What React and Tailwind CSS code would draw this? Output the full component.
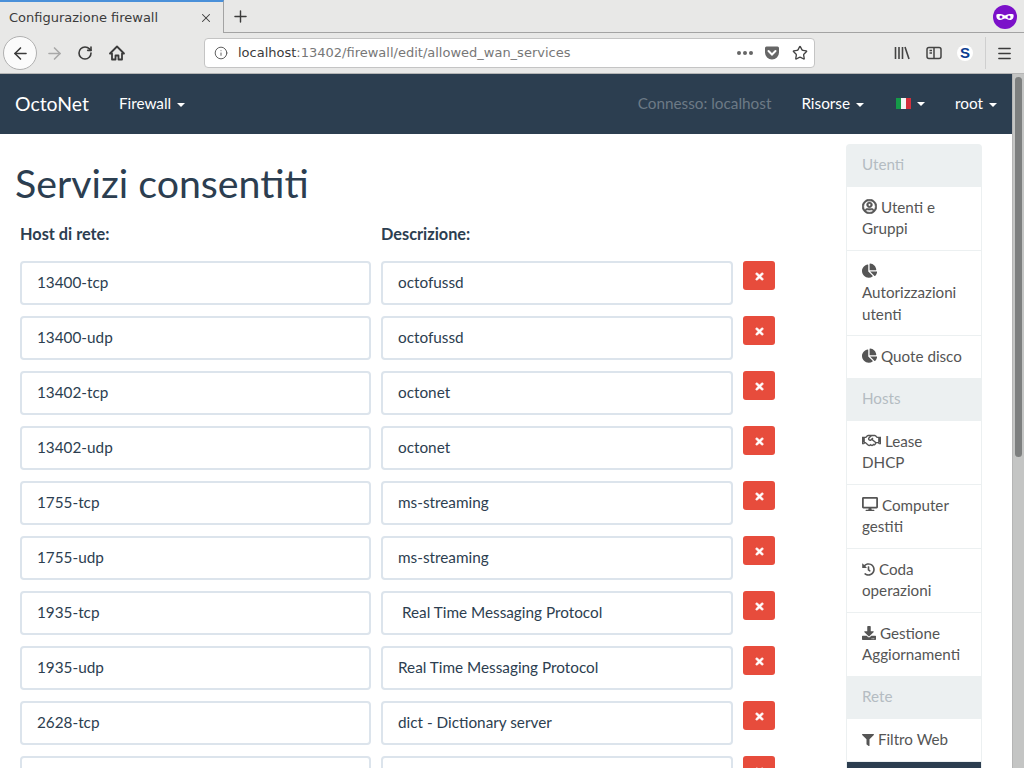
import React from "react";
import { ArrowLeft, ArrowRight, RotateCw, Info, Star, Menu, Plus, X } from "lucide-react";
import { FaRegUserCircle, FaChartPie, FaRegHandshake, FaDesktop, FaHistory, FaDownload, FaFilter, FaTimes } from "react-icons/fa";

const services = [
  ["13400-tcp", "octofussd"],
  ["13400-udp", "octofussd"],
  ["13402-tcp", "octonet"],
  ["13402-udp", "octonet"],
  ["1755-tcp", "ms-streaming"],
  ["1755-udp", "ms-streaming"],
  ["1935-tcp", " Real Time Messaging Protocol"],
  ["1935-udp", "Real Time Messaging Protocol"],
  ["2628-tcp", "dict - Dictionary server"],
  ["", ""],
];

const sidebar = [
  { header: "Utenti" },
  { icon: <FaRegUserCircle className="inline align-[-1px] text-[15px]" stroke="currentColor" strokeWidth={24} />, label: "Utenti e Gruppi" },
  { icon: <FaChartPie className="inline align-[-1px]" />, label: "Autorizzazioni utenti" },
  { icon: <FaChartPie className="inline align-[-1px]" />, label: "Quote disco" },
  { header: "Hosts" },
  { icon: <FaRegHandshake className="inline align-[-3px] text-[19px]" />, label: "Lease DHCP" },
  { icon: <FaDesktop className="inline align-[-1px] text-[16px]" />, label: "Computer gestiti" },
  { icon: <FaHistory className="inline align-[-1px] text-[13px]" />, label: "Coda operazioni" },
  { icon: <FaDownload className="inline align-[-1px] text-[14px]" />, label: "Gestione Aggiornamenti" },
  { header: "Rete" },
  { icon: <FaFilter className="inline align-[-1px] text-[12px]" />, label: "Filtro Web" },
  { label: "Servizi consentiti", active: true },
];

const Caret = () => (
  <span className="inline-block ml-[6px] align-middle w-0 h-0 border-x-[4px] border-x-transparent border-t-[4px] border-t-white" />
);

const BrowserChrome = () => (
  <div className="shrink-0 bg-[#e8e8e7] text-[#3b3b3b] font-['DejaVu_Sans',sans-serif]">
    {/* tab strip */}
    <div className="flex items-stretch h-[33px]">
      <div className="w-[224px] bg-[#e8e8e7] border-t-2 border-t-[#4a90d9] border-r border-r-[#a3a3a3] flex items-center pl-[9px] pr-[10px] text-[13px]">
        <span className="flex-1">Configurazione firewall</span>
        <X size={14} strokeWidth={1.8} />
      </div>
      <div className="flex-1 border-b border-b-[#a3a3a3] flex items-center pl-[7px] relative">
        <Plus size={19} strokeWidth={1.8} />
        <svg viewBox="0 0 24 24" className="absolute right-[7px] top-[5px] w-[24px] h-[24px]">
          <circle cx="12" cy="12" r="12" fill="#7b10c9" />
          <path d="M3.500 9.500c3-.8 5-.3 8.500 1 3.500-1.300 5.500-1.800 8.500-1 .6 3-.8 5.500-3.500 5.500-2.300 0-3.500-1.500-5-1.500s-2.700 1.500-5 1.500C4.300 15 2.900 12.500 3.500 9.500z" fill="#fff" />
          <circle cx="8" cy="12" r="1.500" fill="#7b10c9" />
          <circle cx="16" cy="12" r="1.500" fill="#7b10c9" />
        </svg>
      </div>
    </div>
    {/* toolbar */}
    <div className="flex items-center h-[41px] border-b border-b-[#b5b5b5] relative">
      <div className="ml-[3px] w-[34px] h-[34px] rounded-full bg-[#fbfbfb] border border-[#b0b0b0] flex items-center justify-center">
        <ArrowLeft size={19} strokeWidth={2} />
      </div>
      <ArrowRight size={19} strokeWidth={2} className="ml-[8px] text-[#a8a8a8]" />
      <RotateCw size={16} strokeWidth={2.4} className="ml-[13px]" />
      <svg viewBox="0 0 16 16" className="ml-[16px] w-[16px] h-[16px]">
        <path d="M8 1.500L1 8.500h2v6h3.500v-4h3v4H13v-6h2z" fill="none" stroke="#3b3b3b" strokeWidth="1.800" strokeLinejoin="round" />
      </svg>
      <div className="ml-[79px] w-[611px] h-[30px] bg-white border border-[#c4c4c4] rounded-[4px] flex items-center pl-[9px] pr-[6px] text-[13px]">
        <Info size={14} strokeWidth={1.6} className="text-[#555]" />
        <span className="ml-[10px] flex-1">
          localhost<span className="text-[#777]">:13402/firewall/edit/allowed_wan_services</span>
        </span>
        <span className="flex gap-[2px] mr-[11px]">
          <span className="w-[4px] h-[4px] rounded-full bg-[#666]" />
          <span className="w-[4px] h-[4px] rounded-full bg-[#666]" />
          <span className="w-[4px] h-[4px] rounded-full bg-[#666]" />
        </span>
        <svg viewBox="0 0 16 16" className="w-[16px] h-[16px] mr-[12px]">
          <path d="M1 3a1.500 1.500 0 0 1 1.500-1.500h11A1.500 1.500 0 0 1 15 3v4.500a7 7 0 0 1-14 0z" fill="#666" />
          <path d="M4.500 6L8 9.500 11.500 6" fill="none" stroke="#fff" strokeWidth="2" strokeLinecap="round" />
        </svg>
        <Star size={16} strokeWidth={2} className="text-[#444]" />
      </div>
      {/* library, sidebar, S extension, menu */}
      <svg viewBox="0 0 16 16" className="ml-[79px] w-[16px] h-[16px]" fill="none" stroke="#444" strokeWidth="1.600">
        <path d="M1.500 2v12M5 2v12M8.500 2v12M11 2l4 12" />
      </svg>
      <svg viewBox="0 0 16 16" className="ml-[16px] w-[16px] h-[16px]" fill="none" stroke="#444" strokeWidth="1.500">
        <rect x="1" y="2.500" width="14" height="11" rx="2" />
        <path d="M8 2.500v11M3.500 5.500h2.500M3.500 8h2.500" />
      </svg>
      <span className="ml-[15px] w-[16px] h-[16px] rounded-full bg-white flex items-center justify-center text-[15px] font-bold text-[#0a3d91] font-['Liberation_Sans',sans-serif]">S</span>
      <span className="ml-[12px] w-px h-[32px] bg-[#cfcfcf]" />
      <Menu size={17} strokeWidth={2} className="ml-[10px]" />
    </div>
  </div>
);

const Navbar = () => (
  <nav className="h-[60px] bg-[#2c3e50] text-white flex items-center pl-[15px] pr-[15px] pb-[1px] text-[15.3px]">
    <span className="text-[19.4px] mr-[30px]">OctoNet</span>
    <span>Firewall<Caret /></span>
    <span className="ml-auto text-[#6d7a86] mr-[30px]">Connesso: localhost</span>
    <span className="mr-[32px]">Risorse<Caret /></span>
    <span className="mr-[30px] flex items-center">
      <span className="flex w-[15px] h-[11px]">
        <span className="flex-1 bg-[#159a48]" />
        <span className="flex-1 bg-[#f5f5f5]" />
        <span className="flex-1 bg-[#d3303c]" />
      </span>
      <Caret />
    </span>
    <span>root<Caret /></span>
  </nav>
);

const ServiceRow = ({ host, description }) => (
  <div className="flex items-start mb-[11px]">
    <input
      readOnly
      value={host}
      className="w-[351px] h-[44px] px-[15px] pb-[2px] border-2 border-[#dce4ec] rounded-[4px] text-[15.3px] text-[#2c3e50] bg-white outline-none"
    />
    <input
      readOnly
      value={description}
      className="w-[352px] h-[44px] ml-[10px] px-[15px] pb-[2px] border-2 border-[#dce4ec] rounded-[4px] text-[15.3px] text-[#2c3e50] bg-white outline-none"
    />
    <button className="ml-[10px] w-[32px] h-[29px] pt-px rounded-[3px] bg-[#e74c3c] text-white flex items-center justify-center text-[11px]">
      <FaTimes stroke="currentColor" strokeWidth={30} />
    </button>
  </div>
);

const Sidebar = () => (
  <aside className="w-[136px] shrink-0 mt-[10px] text-[15.2px] leading-[21.4px]">
    {sidebar.map((item, i) =>
      item.header ? (
        <div key={i} className={`bg-[#ecf0f1] text-[#b4bcc2] px-[16px] py-[10px] h-[43px] -mb-px relative ${i === 0 ? "rounded-t-[4px]" : ""}`}>
          {item.header}
        </div>
      ) : (
        <div
          key={i}
          className={`px-[15px] pt-[10px] pb-[10.200px] border border-[#ecf0f1] -mb-px ${item.active ? "bg-[#2c3e50] text-white border-[#2c3e50]" : "bg-white text-[#555]"}`}
        >
          {item.icon} {item.label}
        </div>
      )
    )}
  </aside>
);

export default function App() {
  return (
    <div className="h-screen overflow-hidden flex flex-col font-['Lato',sans-serif]">
      <BrowserChrome />
      <div className="flex-1 flex min-h-0">
        <div className="flex-1 min-w-0 overflow-hidden">
          <Navbar />
          <div className="flex pr-[30px]">
            <main className="flex-1 pl-[15px]">
              <h1 className="text-[39.3px] leading-[43px] text-[#2c3e50] mt-[27px] mb-[19px]">Servizi consentiti</h1>
              <div className="pl-[5px]">
                <div className="flex font-bold text-[16.3px] leading-[21px] text-[#2c3e50] mb-[17px]">
                  <span className="w-[361px]">Host di rete:</span>
                  <span>Descrizione:</span>
                </div>
                {services.map(([host, description], i) => (
                  <ServiceRow key={i} host={host} description={description} />
                ))}
              </div>
            </main>
            <Sidebar />
          </div>
        </div>
        {/* page scrollbar */}
        <div className="w-[12px] shrink-0 bg-[#c4c5c4] border-l border-l-[#b5b5b5] pl-[2px] pr-[2px] pt-[3px]">
          <div className="h-[380px] rounded-full bg-[#7d7f7f]" />
        </div>
      </div>
    </div>
  );
}
